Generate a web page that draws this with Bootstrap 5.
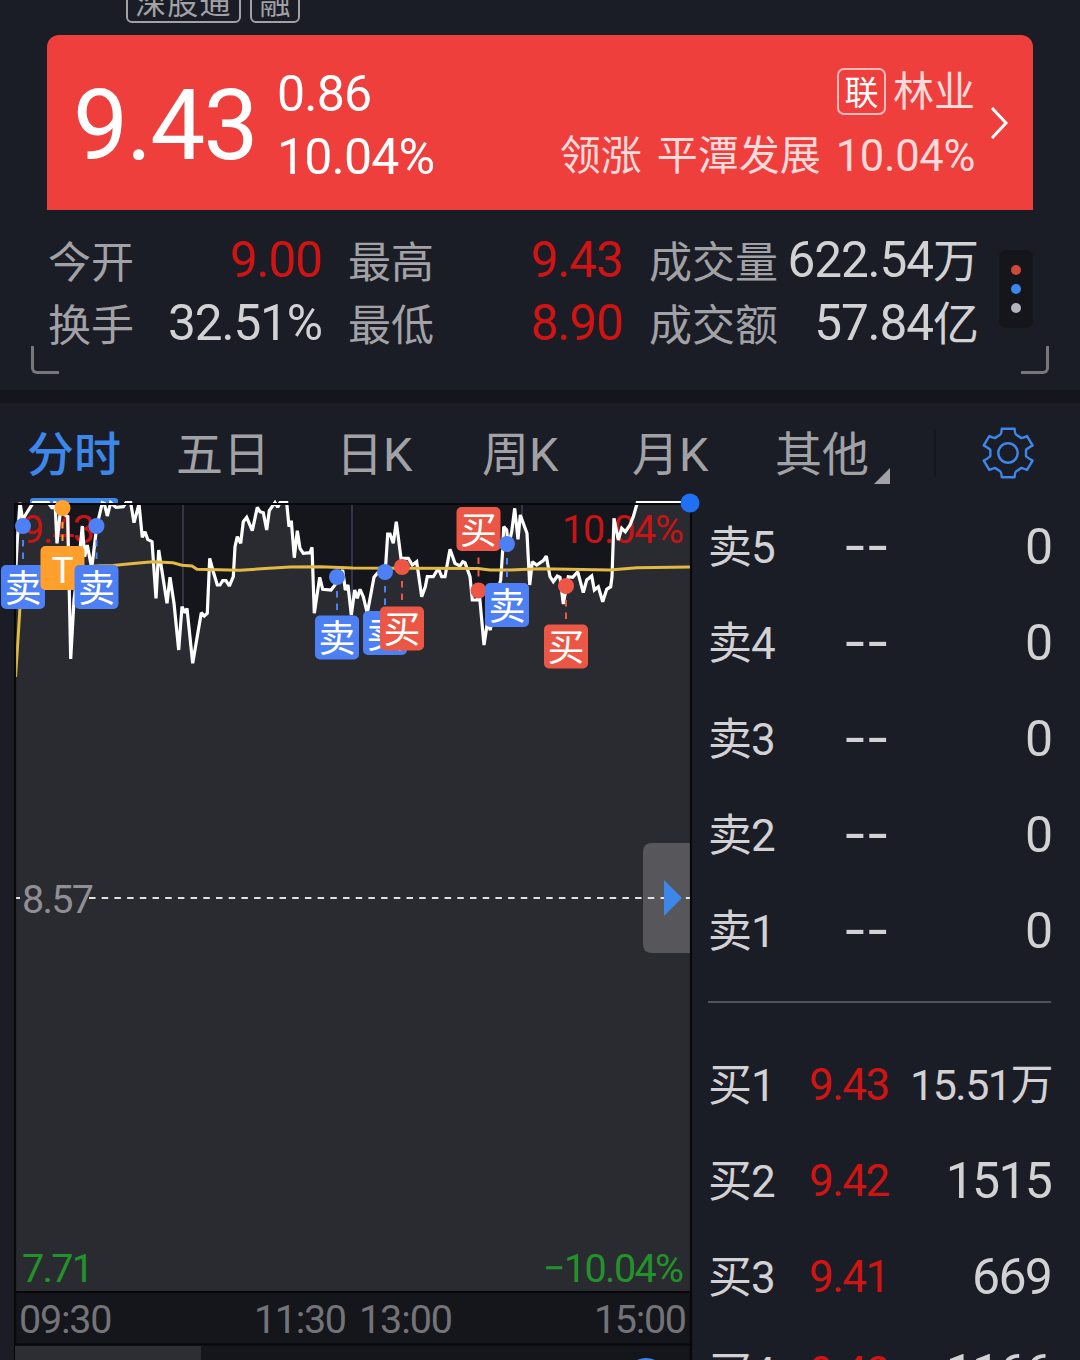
<!DOCTYPE html>
<html lang="zh-CN">
<head>
<meta charset="utf-8">
<meta name="viewport" content="width=device-width, initial-scale=1">
<title>分时行情</title>
<link rel="stylesheet" href="https://cdn.jsdelivr.net/npm/bootstrap@5.3.0/dist/css/bootstrap.min.css">
<style>
body{background:#1b1d26;color:#a2a2a6;font-family:Roboto,"Noto Sans CJK SC",sans-serif;width:1080px;height:1360px;overflow:hidden;line-height:1}
.toprow{height:35px;padding-left:126px}
.tags{gap:9px;margin-bottom:12px}
.tagbox{height:44px;border:2px solid #a2a2a6;border-radius:6px;font-size:31px;line-height:45px;padding:0 7px;white-space:nowrap;letter-spacing:1.3px}
.tagbox + .tagbox{letter-spacing:0;padding:0 7.500px}
.quote{margin:0 47px;height:175px;background:#ef3f3d;border-radius:12px 12px 0 0;color:#fff;padding:0 24px 0 26px}
.price{font-size:98px;line-height:100px;letter-spacing:-1.8px;width:204px;padding-top:7px}
.chg{font-size:50px;line-height:63px;letter-spacing:-.8px;padding-top:6px}
.sector{color:#ffdada;font-size:41px;line-height:63px;margin-right:14px}
.secname{padding-top:3px;height:63px}
.lian{width:49px;height:47px;border:2px solid #fbb;border-radius:7px;font-size:34px;line-height:46px;color:#fff;margin:-3px 7px 0 0}
.leader{padding-top:2px;height:63px;gap:15px}
.pct{font-size:43.500px;letter-spacing:-.3px}
.stats{height:180px;padding:19px 47px 0 48px}
.statgrid{display:grid;grid-template-columns:274px 275px 330px;column-gap:26px;width:931px;align-content:start}
.cell{height:63px;font-size:43px;line-height:68px;white-space:nowrap}
.val{font-size:49.500px;letter-spacing:-1.1px;color:#d2d2d4;line-height:62px}
.val small{font-size:46px;letter-spacing:0}
.up{color:#d01414}
.dots{width:34px;height:78px;background:#15161b;border-radius:7px;gap:9px;margin-top:21px}
.dots i{width:10px;height:10px;border-radius:50%}
.corner{width:28px;height:28px;border:3px solid #77777c;border-top:0;top:346px}
.corner-l{left:31px;border-right:0;border-radius:0 0 0 6px}
.corner-r{right:31px;border-left:0;border-radius:0 0 6px 0}
.band{height:13px;background:#15161b}
.tabs{height:99px;padding-left:27px;font-size:47px}
.tab{height:99px;line-height:104px;flex:none;white-space:nowrap}
.tab.on{color:#3d86ea;font-weight:500}
.tabline{left:30px;top:95px;width:88px;height:6px;background:#3d86ea;border-radius:3px 3px 0 0}
.vline{width:2px;height:48px;background:#15161b}
.book{width:343px;color:#d2d2d4;margin-left:8px}
.lvl{height:96px;font-size:44px;line-height:100px;white-space:nowrap}
.lvl .nm{width:101px;letter-spacing:-1px}
.lvl .pr{width:78px;letter-spacing:-1.5px;line-height:99px}
.lvl .qt{font-size:50px;letter-spacing:-1px;line-height:98px;margin-right:-1px}
.lvl .qs{font-size:43px;letter-spacing:-1.5px;line-height:99px}
.lvl .qn{letter-spacing:-1.8px;margin-right:0}
.lvl .dash{font-size:55px;letter-spacing:2.5px;line-height:96px;text-align:center;transform:scaleX(1.28);margin-left:20px}
.sep{height:2px;background:#50525a;margin:23px 0 33px}
svg text{font-family:Roboto,"Noto Sans CJK SC",sans-serif}
</style>
<script src="https://cdn.jsdelivr.net/npm/bootstrap@5.3.0/dist/js/bootstrap.bundle.min.js"></script>
</head>
<body class="position-relative">
<div class="toprow d-flex align-items-start"><div class="tags d-flex align-self-end"><span class="tagbox">深股通</span><span class="tagbox">融</span></div></div>

<section class="quote d-flex align-items-center">
  <div class="price">9.43</div>
  <div class="chg"><div>0.86</div><div>10.04%</div></div>
  <div class="sector ms-auto">
    <div class="secname d-flex justify-content-end align-items-center"><span class="lian text-center">联</span><span>林业</span></div>
    <div class="leader d-flex justify-content-end"><span>领涨</span><span>平潭发展</span><span class="pct">10.04%</span></div>
  </div>
  <svg width="20" height="34" viewBox="0 0 20 34" fill="none" stroke="#fff" stroke-width="3"><path d="M3 2 17 17 3 32"/></svg>
</section>

<section class="stats d-flex">
  <div class="statgrid">
    <div class="cell d-flex justify-content-between"><span>今开</span><span class="val up">9.00</span></div>
    <div class="cell d-flex justify-content-between"><span>最高</span><span class="val up">9.43</span></div>
    <div class="cell d-flex justify-content-between"><span>成交量</span><span class="val">622.54<small>万</small></span></div>
    <div class="cell d-flex justify-content-between"><span>换手</span><span class="val">32.51%</span></div>
    <div class="cell d-flex justify-content-between"><span>最低</span><span class="val up">8.90</span></div>
    <div class="cell d-flex justify-content-between"><span>成交额</span><span class="val">57.84<small>亿</small></span></div>
  </div>
  <div class="dots d-flex flex-column align-items-center justify-content-center ms-auto"><i style="background:#cc4a3a"></i><i style="background:#3d86ea"></i><i style="background:#b4b4b8"></i></div>
  <span class="corner corner-l position-absolute"></span><span class="corner corner-r position-absolute"></span>
</section>
<div class="band"></div>

<nav class="tabs d-flex align-items-center position-relative">
  <span class="tab on" style="width:149px">分时</span><span class="tab" style="width:160px">五日</span><span class="tab" style="width:146px">日K</span><span class="tab" style="width:150px">周K</span><span class="tab" style="width:143px">月K</span><span class="tab" style="width:98px">其他</span>
  <svg width="16" height="16" class="align-self-end" style="margin:0 0 18px 1px"><path d="M16 0V16H0Z" fill="#a2a2a6"/></svg>
  <span class="vline" style="margin-left:44px"></span>
  <svg width="54" height="54" viewBox="1280 621 156 156" style="margin-left:45px" fill="none" stroke="#3d86ea" stroke-width="7" stroke-linejoin="round"><path d="M1340 629H1377Q1378 645 1383 647L1397 656Q1403 654 1413 650L1429 677Q1412 687 1410 690V708Q1412 711 1429 721L1413 748Q1403 744 1397 742L1383 751Q1378 753 1377 769H1340Q1339 753 1334 751L1320 742Q1314 744 1304 748L1288 721Q1305 711 1307 708V690Q1305 687 1288 677L1304 650Q1314 654 1320 656L1334 647Q1339 645 1340 629Z"/><circle cx="1358" cy="699" r="28"/></svg>
  <span class="tabline position-absolute"></span>
</nav>

<main class="d-flex">
<svg width="700" height="858" viewBox="0 502 700 858" class="flex-shrink-0 position-relative" overflow="visible" id="chart">
  <rect x="14" y="504" width="677" height="856" fill="#15161b"/>
  <path d="M183 504V760M352 504V760M522 504V760" stroke="#343647" stroke-width="2"/>
  <path id="area" fill="#2a2b30"/>
  <g font-size="39.500">
    <text x="22" y="543" fill="#c81414" textLength="73">9.43</text>
    <text x="562" y="543" fill="#c81414" textLength="122">10.04%</text>
    <text x="22" y="913" fill="#8f8f94" textLength="72">8.57</text>
    <text x="22" y="1282" fill="#22932a" textLength="72">7.71</text>
    <text x="543" y="1282" fill="#22932a" textLength="141">−10.04%</text>
  </g>
  <path d="M643 953V852Q643 843 652 843H690V953H652Q643 953 643 944Z" fill="#57565b"/>
  <path d="M15 898H20M89 898H690" stroke="#e2e2e2" stroke-width="2" stroke-dasharray="6.5 6.2"/>
  <path d="M664 880 682 898 664 916Z" fill="#3d86ea"/>
  <path id="price" fill="none" stroke="#fff" stroke-width="3.2" stroke-linejoin="miter" stroke-miterlimit="2"/>
  <path d="M15.5 677Q19 625 21 590Q24 572 60 568Q90 566 113 565.5L133 563.5 153 561.7 173 562.7 182 565.3 192 566 197 569.3 240 570.3 265 568.5 290 567 320 566.8 353 568 478 568.5 490 570 510 570 540 568.8 610 570 637 567.7 690 567" fill="none" stroke="#e2b944" stroke-width="3"/>
  <path d="M14 504H691M15 504V1360M691 504V1360M14 1292H692M14 1344.500H692" fill="none" stroke="#08080c" stroke-width="2.200"/>
  <rect x="15" y="1346" width="186" height="14" fill="#2d2e33"/>
  <circle cx="646" cy="1380" r="22" fill="#3d86ea"/>
  <g font-size="39.500" fill="#737378">
    <text x="19" y="1333" textLength="93.500">09:30</text>
    <text x="254" y="1333" textLength="93">11:30</text>
    <text x="359" y="1333" textLength="94">13:00</text>
    <text x="594" y="1333" textLength="93">15:00</text>
  </g>
  <g id="marks" font-size="37" fill="#fff" text-anchor="middle"></g>
  <circle cx="690" cy="503" r="9.500" fill="#1f70f5"/>
</svg>
<section class="book">
  <div style="margin-top:-4px">
  <div class="lvl d-flex"><span class="nm">卖5</span><span class="pr dash">--</span><span class="qt ms-auto">0</span></div>
  <div class="lvl d-flex"><span class="nm">卖4</span><span class="pr dash">--</span><span class="qt ms-auto">0</span></div>
  <div class="lvl d-flex"><span class="nm">卖3</span><span class="pr dash">--</span><span class="qt ms-auto">0</span></div>
  <div class="lvl d-flex"><span class="nm">卖2</span><span class="pr dash">--</span><span class="qt ms-auto">0</span></div>
  <div class="lvl d-flex"><span class="nm">卖1</span><span class="pr dash">--</span><span class="qt ms-auto">0</span></div>
  </div>
  <div class="sep"></div>
  <div class="lvl d-flex"><span class="nm">买1</span><span class="pr up">9.43</span><span class="qt qs ms-auto">15.51万</span></div>
  <div class="lvl d-flex"><span class="nm">买2</span><span class="pr up">9.42</span><span class="qt qn ms-auto">1515</span></div>
  <div class="lvl d-flex"><span class="nm">买3</span><span class="pr up">9.41</span><span class="qt qn ms-auto">669</span></div>
  <div class="lvl d-flex"><span class="nm">买4</span><span class="pr up">9.40</span><span class="qt qn ms-auto">1166</span></div>
</section>
</main>
<script>
// price samples: [x offset, pairs in thirds of a pixel]
const runs=[[0,"48,225 52,150 60,38 68,90 78,72 100,38 145,38 157,55 165,35 171,160 181,65 203,80 212,507 222,330 235,230 247,108 254,200 262,165 275,235 290,110 307,38 313,40 322,78 332,38 348,52 370,50 378,38 392,38 402,98 417,42 427,142 435,125 443,148 456,155 468,325 476,180 501,340 510,262 522,340 536,480 546,350 555,368 561,355 578,520 604,368 613,378 622,370 629,205 640,245 652,285 660,285 668,272 678,272 688,288"],
[220,"40,260 45,170 52,140 62,160 70,95 80,82 97,122 112,52 120,65 130,68 140,120 148,62 160,45 165,38 173,52 180,38 200,38 207,110 214,92 223,203 232,122 240,175 250,190 270,188 276,172 283,370 299,262 308,298 333,300 345,285 368,240 376,300 384,285 394,375 404,300 412,325 420,298 430,320 442,370 462,262 480,240 497,225 503,132 510,132 520,160 529,95 543,205 565,205 577,225 590,215 605,320 616,290 622,260 640,260 655,235"],
[440,"5,260 15,260 30,178 45,220 60,228 68,215 75,218 90,260 97,330 112,330 118,310 132,465 142,400 151,420 165,330 182,270 188,180 191,110 200,120 205,170 215,125 224,55 234,148 241,75 250,100 261,130 269,285 277,215 290,225 310,212 319,198 330,260 340,275 352,258 360,262 370,342 385,260 398,262 413,245 430,308 440,270 455,258 463,300 475,290 488,335 500,298 512,290 516,260 522,85 535,150 545,115 556,125 570,105 580,80 592,38 750,38"]];
const pts=runs.flatMap(([o,s])=>s.split(" ").map(p=>{const[a,b]=p.split(",");return (o+a/3).toFixed(1)+" "+(490+b/3).toFixed(1)}));
document.getElementById("price").setAttribute("d","M"+pts.join("L"));
document.getElementById("area").setAttribute("d","M"+pts.join("L")+"V1292H15Z");
// trade marks: dot x, dot y, box centre x, box centre y, label, colour
const B="#4d80f5",R="#ec5645",O="#ff9f2c";
document.getElementById("marks").innerHTML=[[23,526,23,587,"卖",B],[62.5,508,62.5,568,"T",O],[96.5,526,96.5,587,"卖",B],[337,577,337,637.5,"卖",B],[385,572,385,633,"卖",B],[402,567,402,628.5,"买",R],[478.5,590.5,478.5,529,"买",R],[507,544,507,605,"卖",B],[566,586,566,646.5,"买",R]].map(([x,y,bx,by,t,c])=>{
const s=by>y?1:-1;
return `<path d="M${x} ${y+s*14}v${s*19}" stroke="${c}" stroke-width="2" stroke-dasharray="6.5 6"/><circle cx="${x}" cy="${y}" r="8" fill="${c}"/><rect x="${bx-22}" y="${by-22}" width="44" height="44" rx="5" fill="${c}"/><text x="${bx}" y="${by+14.5}">${t}</text>`}).join("");
</script>
</body>
</html>
